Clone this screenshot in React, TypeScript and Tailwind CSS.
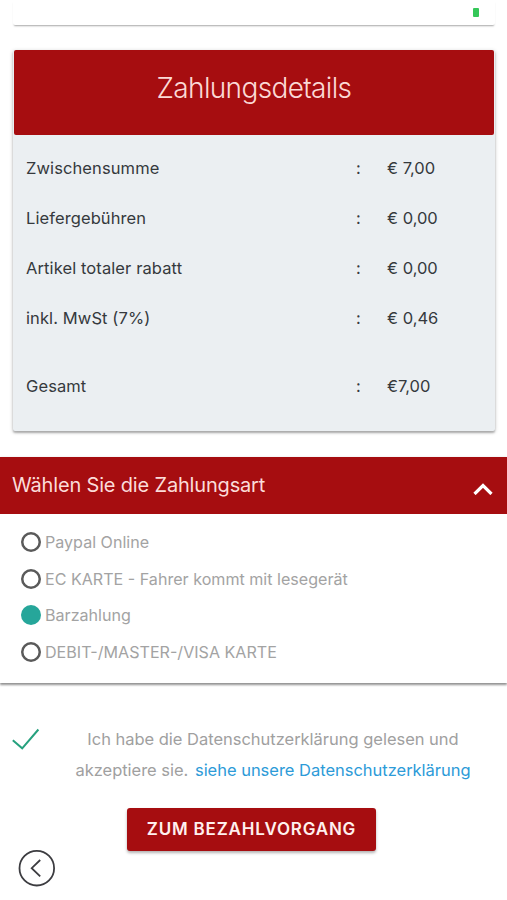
import { useState } from 'react';
import clsx from 'clsx';

const summaryRows = [
  { label: 'Zwischensumme', value: '€ 7,00' },
  { label: 'Liefergebühren', value: '€ 0,00' },
  { label: 'Artikel totaler rabatt', value: '€ 0,00' },
  { label: 'inkl. MwSt (7%)', value: '€ 0,46' },
];

const paymentMethods = [
  { id: 'paypal', label: 'Paypal Online' },
  { id: 'ec', label: 'EC KARTE - Fahrer kommt mit lesegerät' },
  { id: 'cash', label: 'Barzahlung' },
  { id: 'card', label: 'DEBIT-/MASTER-/VISA KARTE' },
];

function SummaryRow({ label, value }: { label: string; value: string }) {
  return (
    <div className="flex h-[50px] items-center text-[16.5px] text-[#35393d]">
      <span className="w-[330px] tracking-[0.1px]">{label}</span>
      <span className="w-[31px]">:</span>
      <span>{value}</span>
    </div>
  );
}

function PaymentDetails() {
  return (
    <section className="mr-3 ml-[13px] mt-[25px] h-[381px] rounded-[2px] bg-[#ebeff2] shadow-[0_2px_2px_0_rgba(0,0,0,0.24),0_1px_4px_0_rgba(0,0,0,0.2)]">
      <h1 className="mx-px flex h-[85px] items-center justify-center rounded-[2px] bg-[#a60d10] pb-[9px] text-[28px] font-light tracking-[-0.65px] text-[#fbd9d6]">
        Zahlungsdetails
      </h1>
      <div className="px-[13px] pt-[8px]">
        {summaryRows.map((row) => (
          <SummaryRow key={row.label} label={row.label} value={row.value} />
        ))}
        <div className="mt-[18px]">
          <SummaryRow label="Gesamt" value="€7,00" />
        </div>
      </div>
    </section>
  );
}

function PaymentMethods() {
  const [open, setOpen] = useState(true);
  const [selected, setSelected] = useState('cash');

  return (
    <section className="mt-[26px] bg-white shadow-[0_2px_2px_0_rgba(0,0,0,0.34),0_1px_3px_0_rgba(0,0,0,0.2)]">
      <button
        onClick={() => setOpen(!open)}
        className="flex h-[57px] w-full items-center justify-between bg-[#a60d10] pr-[14px] pl-3 text-[20px] text-[#fbdcd9]"
      >
        <span className="mb-[2px] tracking-[-0.17px]">Wählen Sie die Zahlungsart</span>
        <svg
          viewBox="0 0 20 12"
          className={clsx('mt-[7px] h-3 w-5', !open && 'rotate-180')}
          fill="none"
          stroke="#fff"
          strokeWidth="3.2"
        >
          <path d="M1.5 11 10 2.5l8.5 8.5" />
        </svg>
      </button>

      {open && (
        <div role="radiogroup" className="flex h-[169px] flex-col pt-[10px] pl-[21px]">
          {paymentMethods.map((method) => (
            <button
              key={method.id}
              role="radio"
              aria-checked={selected === method.id}
              onClick={() => setSelected(method.id)}
              className="flex h-[36.6px] items-center gap-1 text-[16.1px] text-[#a3a3a3]"
            >
              <span
                className={clsx(
                  'h-5 w-5 shrink-0 rounded-full',
                  selected === method.id ? 'bg-[#26a69a]' : 'shadow-[inset_0_0_0_2.5px_#5a5a5a]'
                )}
              />
              {method.label}
            </button>
          ))}
        </div>
      )}
    </section>
  );
}

export default function App() {
  const [accepted, setAccepted] = useState(true);

  return (
    <div className="relative h-[900px] w-full overflow-hidden bg-white font-['Inter',sans-serif]">
      <header className="mr-3 ml-[13px] flex h-[25px] justify-end rounded-b-[2px] bg-white pt-[8px] pr-[16px] shadow-[0_2px_2px_-1px_rgba(0,0,0,0.35)]">
        <span className="h-[9px] w-[6px] rounded-[1px] bg-[#35c759]" />
      </header>

      <PaymentDetails />
      <PaymentMethods />

      <div className="mt-[41px] flex items-start">
        <button onClick={() => setAccepted(!accepted)} aria-label="Akzeptieren" className="ml-3 h-[22px] w-7">
          {accepted && (
            <svg viewBox="0 0 28 22" className="mt-[4px] h-[22px] w-7" fill="none" stroke="#26a17e" strokeWidth="2">
              <path d="M.8 12.2 10.2 20.3 26.4 1.5" />
            </svg>
          )}
        </button>
        <p className="ml-[6px] w-[454px] text-center text-[16.5px] leading-[31px] tracking-[-0.02px] text-[#a0a0a0]">
          Ich habe die Datenschutzerklärung gelesen und
          <br />
          akzeptiere sie.{' '}
          <a href="#" className="ml-[2px] text-[#2d9bd8]">
            siehe unsere Datenschutzerklärung
          </a>
        </p>
      </div>

      <button className="mt-[22px] ml-[127px] flex h-[43px] w-[249px] items-center justify-center rounded-[3px] bg-[#a60d10] pt-px text-[17px] font-semibold tracking-[0.8px] text-[#fff0ee] shadow-[0_2px_3px_0_rgba(0,0,0,0.3)]">
        ZUM BEZAHLVORGANG
      </button>

      <button aria-label="Zurück" className="absolute top-[850px] left-[18px]">
        <svg viewBox="0 0 38 38" className="h-[38px] w-[38px]" fill="none" stroke="#3c3c40" strokeWidth="1.8">
          <circle cx="18.8" cy="18.2" r="17.3" />
          <path d="m22.2 10-8.5 8.2 8.5 8.2" />
        </svg>
      </button>
    </div>
  );
}
